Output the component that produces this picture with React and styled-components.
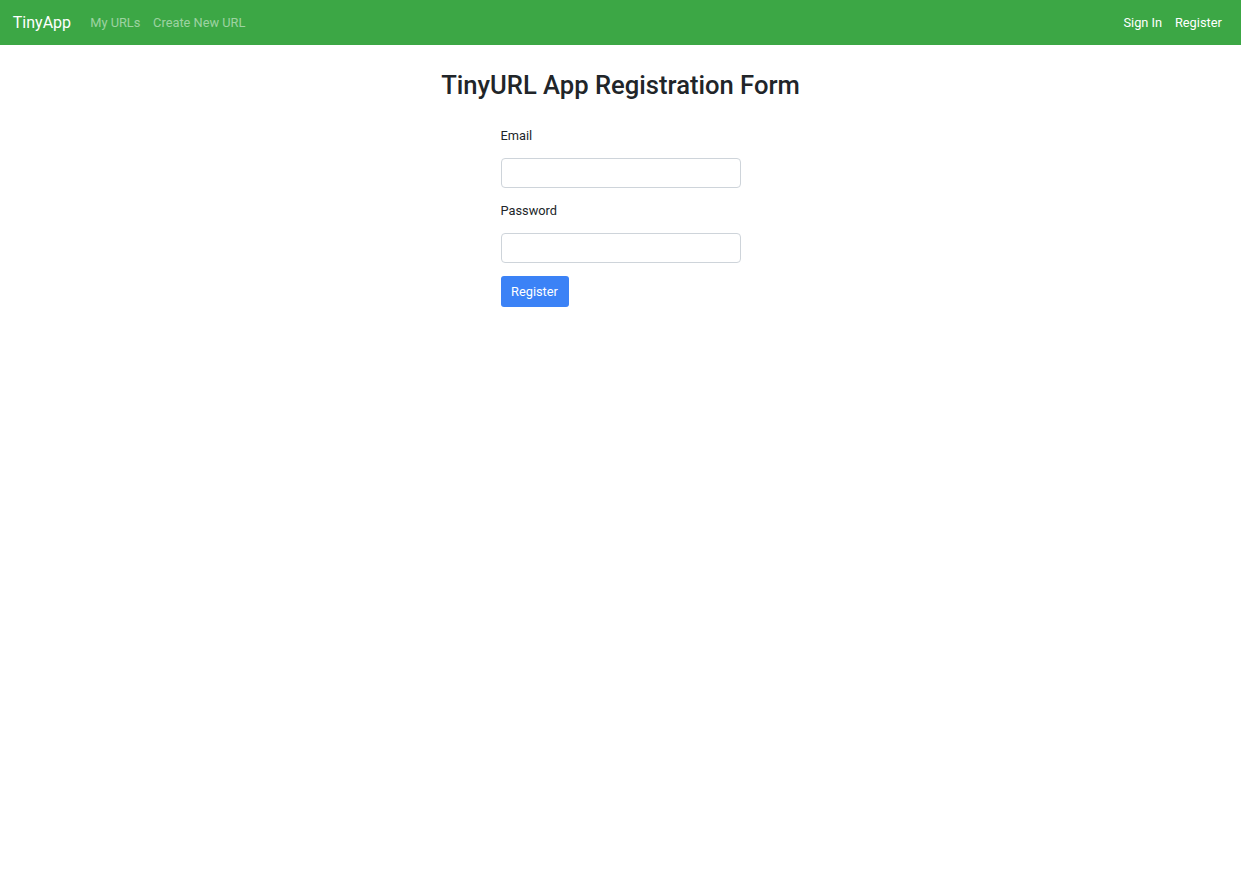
import React from "react";
import styled, { createGlobalStyle } from "styled-components";

const Global = createGlobalStyle`
  * { box-sizing: border-box; }
  body { margin: 0; background: #fff; font-family: Roboto, "Liberation Sans", sans-serif; color: #212529; }
`;

const Navbar = styled.nav`
  height: 45px;
  background: #3ca745;
  display: flex;
  align-items: center;
  padding: 0 12.8px 0 12.8px;
`;

const Brand = styled.a`
  color: #fff;
  font-size: 16px;
  text-decoration: none;
  margin-right: 12.8px;
  line-height: 1;
`;

const NavGroup = styled.div`
  display: flex;
  align-items: center;
  margin-left: ${(p) => (p.$right ? "auto" : "0")};
`;

const NavLink = styled.a`
  font-size: 12.8px;
  padding: 0 6.4px;
  text-decoration: none;
  color: ${(p) => (p.$muted ? "rgba(255,255,255,0.5)" : "#fff")};
`;

const Main = styled.main`
  display: flex;
  flex-direction: column;
  align-items: center;
`;

const Title = styled.h1`
  margin: 25px 0 25px;
  font-size: 25.6px;
  font-weight: 500;
  line-height: 31px;
  color: #212529;
`;

const Form = styled.form`
  width: 240px;
  display: flex;
  flex-direction: column;
  gap: 13px;
`;

const Label = styled.label`
  display: block;
  font-size: 12.8px;
  line-height: 19px;
  color: #212529;
`;

const Input = styled.input`
  display: block;
  width: 240px;
  height: 30px;
  border: 1px solid #ced4da;
  border-radius: 4px;
  padding: 0 8px;
  font: inherit;
  font-size: 12.8px;
  outline: none;
`;

const Button = styled.button`
  align-self: flex-start;
  width: 68px;
  height: 31px;
  background: #3b82f6;
  color: #fff;
  border: none;
  border-radius: 3px;
  font-family: inherit;
  font-size: 12.8px;
  padding: 0;
`;

export default function App() {
  return (
    <>
      <Global />
      <Navbar>
        <Brand href="#">TinyApp</Brand>
        <NavGroup>
          <NavLink $muted href="#">My URLs</NavLink>
          <NavLink $muted href="#">Create New URL</NavLink>
        </NavGroup>
        <NavGroup $right>
          <NavLink href="#">Sign In</NavLink>
          <NavLink href="#">Register</NavLink>
        </NavGroup>
      </Navbar>
      <Main>
        <Title>TinyURL App Registration Form</Title>
        <Form onSubmit={(e) => e.preventDefault()}>
          <Label htmlFor="email">Email</Label>
          <Input id="email" type="email" />
          <Label htmlFor="password">Password</Label>
          <Input id="password" type="password" />
          <Button type="submit">Register</Button>
        </Form>
      </Main>
    </>
  );
}
